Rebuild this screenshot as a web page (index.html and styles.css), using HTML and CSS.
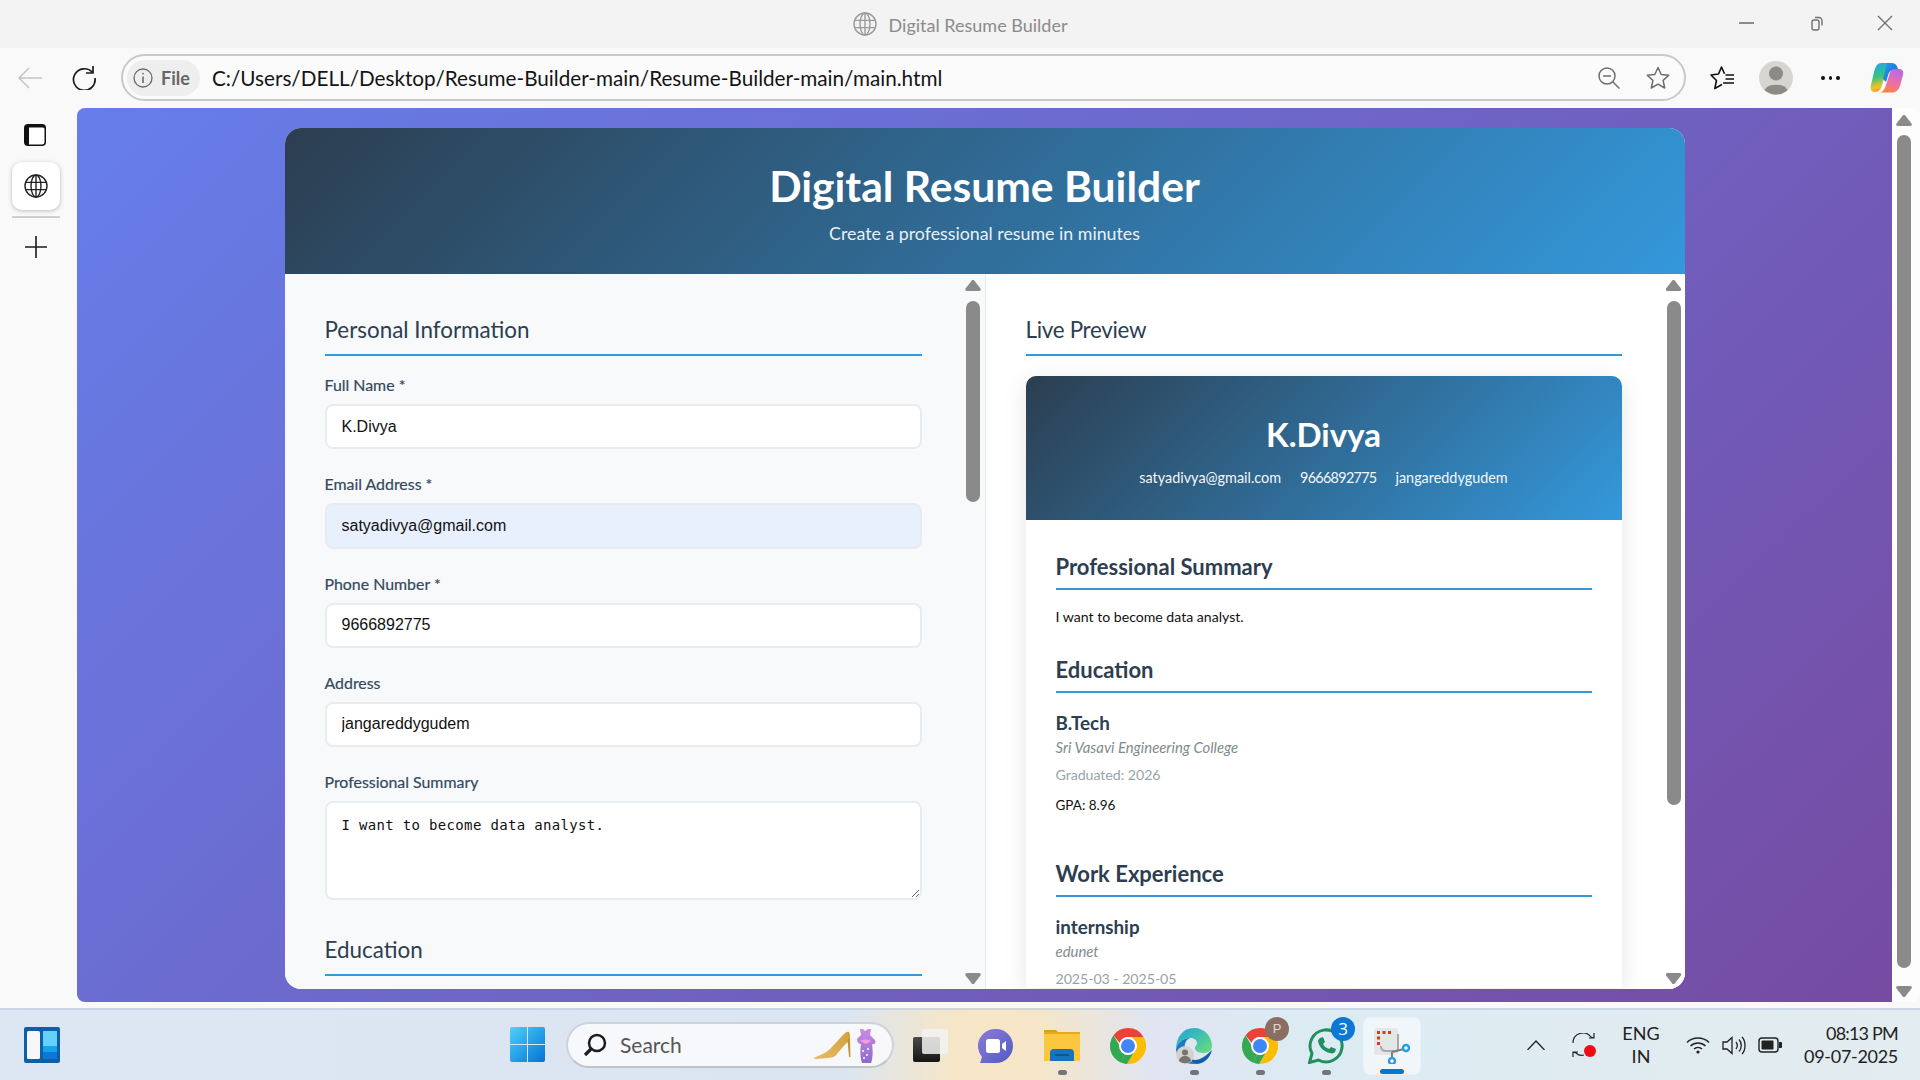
FILE: index.html
```html
<!DOCTYPE html>
<html lang="en">
<head>
<meta charset="utf-8">
<title>Digital Resume Builder</title>
<link rel="stylesheet" href="styles.css">
</head>
<body>
<svg class="defs" width="0" height="0" aria-hidden="true">
  <defs>
    <symbol id="globe" viewBox="0 0 24 24">
      <g fill="none" stroke="currentColor" stroke-width="1.4">
        <circle cx="12" cy="12" r="11"/>
        <ellipse cx="12" cy="12" rx="5" ry="11"/>
        <path d="M12 1v22M1.6 8.4h20.8M1.6 15.6h20.8"/>
      </g>
    </symbol>
    <symbol id="chrome" viewBox="0 0 36 36">
      <path d="M18 0a18 18 0 0 1 15.6 9H18a9 9 0 0 0-8.4 5.8L3.5 7.3A18 18 0 0 1 18 0z" fill="#ea4335"/>
      <path d="M3.5 7.3l7.8 13.3A9 9 0 0 0 15 26.5L11.2 34.7A18 18 0 0 1 3.5 7.3z" fill="#34a853"/>
      <path d="M33.6 9A18 18 0 0 1 18 36h-1l7.7-13a9 9 0 0 0-.2-10.6L22 9z" fill="#fbbc04"/>
      <path d="M11 34.6L15 26.4a9 9 0 0 0 9.7-3.4L17 36a18 18 0 0 1-6-1.4z" fill="#34a853"/>
      <circle cx="18" cy="18" r="9" fill="#fff"/>
      <circle cx="18" cy="18" r="7" fill="#4285f4"/>
    </symbol>
    <linearGradient id="copA" x1="0.3" y1="0" x2="0.5" y2="1"><stop offset="0" stop-color="#1fa8e8"/><stop offset=".45" stop-color="#35c47c"/><stop offset=".8" stop-color="#f6c324"/><stop offset="1" stop-color="#f58a2c"/></linearGradient>
    <linearGradient id="copB" x1="0.7" y1="0" x2="0.3" y2="1"><stop offset="0" stop-color="#b86ae6"/><stop offset=".55" stop-color="#ee6fa6"/><stop offset="1" stop-color="#f8843c"/></linearGradient>
    <linearGradient id="copC" x1="0" y1="0" x2="1" y2="1"><stop offset="0" stop-color="#1c9ceb"/><stop offset="1" stop-color="#2a62e0"/></linearGradient>
    <linearGradient id="winG" x1="0" y1="0" x2="1" y2="1"><stop offset="0" stop-color="#50d0fb"/><stop offset="1" stop-color="#0074d4"/></linearGradient>
    <linearGradient id="meetG" x1="0" y1="0" x2="1" y2="1"><stop offset="0" stop-color="#8f7bd8"/><stop offset="1" stop-color="#4e5bc4"/></linearGradient>
    <linearGradient id="edgeG" x1="0" y1="0" x2="1" y2="1"><stop offset="0" stop-color="#1ba3dd"/><stop offset="1" stop-color="#6be07a"/></linearGradient>
    <linearGradient id="dressG" x1="0" y1="0" x2="0" y2="1"><stop offset="0" stop-color="#c98be6"/><stop offset="1" stop-color="#8d6bc8"/></linearGradient>
    <linearGradient id="shoeG" x1="0" y1="1" x2="1" y2="0"><stop offset="0" stop-color="#e6bc62"/><stop offset="1" stop-color="#d3a03c"/></linearGradient>
    <linearGradient id="copyG" x1="0" y1="0" x2="0" y2="1"><stop offset="0" stop-color="#4a4a4a"/><stop offset="1" stop-color="#151515"/></linearGradient>
  </defs>
</svg>

<div class="screen">
  <div class="window">
    <header class="titlebar">
      <div></div>
      <div class="title">
        <svg class="title-globe"><use href="#globe"/></svg>
        <span>Digital Resume Builder</span>
      </div>
      <div class="win-controls">
        <svg class="ctl" viewBox="0 0 16 16"><path d="M0 8h15" stroke="#707070" stroke-width="1.6"/></svg>
        <svg class="ctl" viewBox="0 0 16 16" fill="none" stroke="#707070" stroke-width="1.4"><rect x="4" y="5" width="7" height="10" rx="2"/><path d="M7 2.5h4a3 3 0 0 1 3 3v5"/></svg>
        <svg class="ctl" viewBox="0 0 16 16"><path d="M1 1l14 14M15 1L1 15" stroke="#707070" stroke-width="1.4"/></svg>
      </div>
    </header>

    <nav class="toolbar">
      <svg class="tb-back" viewBox="0 0 24 24" fill="none" stroke="#c4c4c4" stroke-width="1.5"><path d="M24 12H1M11 2L1 12l10 10"/></svg>
      <svg class="tb-reload" viewBox="0 0 24 24" fill="none" stroke="#1a1a1a" stroke-width="1.7"><path d="M20.5 6.5A10.8 10.8 0 1 0 23 12"/><path d="M21 0v7h-7"/></svg>
      <div class="address">
        <div class="chip">
          <svg class="chip-i" viewBox="0 0 20 20" fill="none" stroke="#6a6a6a" stroke-width="1.3"><circle cx="10" cy="10" r="9"/><path d="M10 8.5V15" stroke-width="1.6"/><circle cx="10" cy="5.6" r=".9" fill="#6a6a6a" stroke="none"/></svg>
          <span>File</span>
        </div>
        <span class="url">C:/Users/DELL/Desktop/Resume-Builder-main/Resume-Builder-main/main.html</span>
        <svg class="addr-zoom" viewBox="0 0 22 22" fill="none" stroke="#6e6e6e" stroke-width="1.5"><circle cx="9" cy="9" r="8"/><path d="M5 9h8M14.7 14.7L21.5 21.5"/></svg>
        <svg class="addr-star" viewBox="0 0 24 24" fill="none" stroke="#6e6e6e" stroke-width="1.5" stroke-linejoin="round"><path d="M12 1.5l3.2 7 7.6.8-5.7 5.1 1.6 7.6-6.7-3.9-6.7 3.9 1.6-7.600L1.2 9.3l7.6-.8z"/></svg>
      </div>
      <svg class="tb-favs" viewBox="0 0 24 24" fill="none" stroke="#111" stroke-width="1.600" stroke-linejoin="round"><path d="M14.500 7.800L11.500 1 8.500 8 1 9l5.500 5.500-1.700 8 7.200-4"/><path d="M15.500 9h8.500M15.500 13H24M13 17h11"/></svg>
      <div class="avatar">
        <svg viewBox="0 0 34 34"><circle cx="17" cy="17" r="17" fill="#d6d5d1"/><circle cx="17" cy="12.500" r="7" fill="#8e8b87"/><path d="M5.500 29a12 7.500 0 0 1 23 0 17 17 0 0 1-23 0z" fill="#8e8b87"/></svg>
      </div>
      <div class="dots"><i></i><i></i><i></i></div>
      <svg class="copilot" viewBox="0 0 34 32">
        <path d="M11 1h12c-3 0-5 2-6 6l-5 16c-1 4-3 7-7 7s-5-3-4-7l3-13C5.500 4 8 1 11 1z" fill="url(#copA)"/>
        <path d="M23 7h6c3.500 0 5 2.500 4 6l-3 11c-1.500 4-4 6.500-8 6.500H9c3 0 5-2 6.500-6L20 10.500C21 8 22 7 23 7z" fill="url(#copB)"/>
        <path d="M17 1h5c3 0 5 2 6 6-5-.5-8 1-9.500 5l-2.500 8-3-3 2.500-9.500C16 4 17 1 17 1z" fill="url(#copC)"/>
      </svg>
    </nav>

    <div class="browser-body">
      <aside class="sidebar">
        <svg class="side-panel" viewBox="0 0 22 22"><path d="M4 0h14a4 4 0 0 1 4 4v14a4 4 0 0 1-4 4H4a4 4 0 0 1-4-4V4a4 4 0 0 1 4-4z" fill="#111"/><path d="M5 3.500h14a1.500 1.500 0 0 1 1.500 1.500v13a2.500 2.500 0 0 1-2.500 2.500H5z" fill="#fff"/></svg>
        <div class="side-tab"><svg class="side-globe"><use href="#globe"/></svg></div>
        <div class="side-rule"></div>
        <svg class="side-plus" viewBox="0 0 22 22"><path d="M11 0v22M0 11h22" stroke="#1a1a1a" stroke-width="1.600"/></svg>
      </aside>

      <main class="viewport">
        <div class="page">
          <section class="app">
            <header class="app-header">
              <h1>Digital Resume Builder</h1>
              <p>Create a professional resume in minutes</p>
            </header>
            <div class="panels">
              <div class="panel panel-form">
                <form class="panel-content">
                  <h2 class="section-title">Personal Information</h2>
                  <div class="field"><label>Full Name *</label><input type="text" value="K.Divya"></div>
                  <div class="field"><label>Email Address *</label><input class="autofilled" type="text" value="satyadivya@gmail.com"></div>
                  <div class="field"><label>Phone Number *</label><input type="text" value="9666892775"></div>
                  <div class="field"><label>Address</label><input type="text" value="jangareddygudem"></div>
                  <div class="field field-area"><label>Professional Summary</label><textarea>I want to become data analyst.</textarea></div>
                  <h2 class="section-title">Education</h2>
                </form>
                <div class="scroll scroll-panel"><i class="up"></i><b class="thumb thumb-form"></b><i class="down"></i></div>
              </div>
              <div class="panel panel-preview">
                <div class="panel-content">
                  <h2 class="section-title">Live Preview</h2>
                  <article class="resume">
                    <header class="resume-head">
                      <h3>K.Divya</h3>
                      <div class="contacts"><span>satyadivya@gmail.com</span><span class="c-phone">9666892775</span><span>jangareddygudem</span></div>
                    </header>
                    <div class="resume-body">
                      <section class="r-section">
                        <h4>Professional Summary</h4>
                        <p class="r-text">I want to become data analyst.</p>
                      </section>
                      <section class="r-section">
                        <h4>Education</h4>
                        <h5>B.Tech</h5>
                        <p class="r-org">Sri Vasavi Engineering College</p>
                        <p class="r-date">Graduated: 2026</p>
                        <p class="r-gpa">GPA: 8.96</p>
                      </section>
                      <section class="r-section r-work">
                        <h4>Work Experience</h4>
                        <h5>internship</h5>
                        <p class="r-org">edunet</p>
                        <p class="r-date">2025-03 - 2025-05</p>
                      </section>
                    </div>
                  </article>
                </div>
                <div class="scroll scroll-panel scroll-preview"><i class="up"></i><b class="thumb thumb-preview"></b><i class="down"></i></div>
              </div>
            </div>
          </section>
        </div>
        <div class="scroll scroll-page"><i class="up"></i><b class="thumb thumb-page"></b><i class="down"></i></div>
      </main>
    </div>
  </div>

  <footer class="taskbar">
    <svg class="widgets" viewBox="0 0 36 36"><rect width="36" height="36" rx="2" fill="#0f5ea8"/><rect x="3" y="4" width="13" height="28" rx="1.500" fill="#f5f7f9"/><rect x="19" y="4" width="14" height="15" fill="#63d2fb"/><rect x="19" y="19" width="14" height="6" fill="#1aa1ee"/><rect x="19" y="25" width="14" height="7" fill="#0a78d8"/></svg>
    <svg class="start" viewBox="0 0 35 35"><path d="M2 0h15v17H0V2a2 2 0 0 1 2-2zM18 0h15a2 2 0 0 1 2 2v15H18zM0 18h17v17H2a2 2 0 0 1-2-2zM18 18h17v15a2 2 0 0 1-2 2H18z" fill="url(#winG)"/></svg>
    <div class="search">
      <svg class="search-lens" viewBox="0 0 24 24" fill="none" stroke="#1c1c1c" stroke-width="2.500"><circle cx="14" cy="10" r="8"/><path d="M8 16l-6 6" stroke-width="3.200"/></svg>
      <span>Search</span>
      <svg class="search-art" viewBox="0 0 66 36">
        <path d="M1 31C6 28 12 27 17 22L30 8c2-2 4-4 6-3 1 1 1 3 1 5l-1 4c-3 2-8 8-12 13-2 3-6 4-10 4L3 32c-2 0-3-.5-2-1z" fill="url(#shoeG)"/>
        <path d="M34.500 13L37 10l.5 20H36z" fill="#c49238"/>
        <path d="M44 12l4-4-1-6h3l2 2 3-2 3 0-1 6 5 5c1 3 0 5-3 4 1 6 1 14-1 19-2 1-7 1-9 0-2-6-2-13-1-19-2 0-4-2-4-5z" fill="url(#dressG)"/>
        <path d="M47 14c3-2 8-2 11 0l-5 3z" fill="#ee9ddf"/>
        <circle cx="50" cy="24" r="1" fill="#fff"/><circle cx="54" cy="28" r="1" fill="#fff"/><circle cx="51" cy="31" r="1" fill="#fff"/><circle cx="55" cy="22" r="1" fill="#fff"/>
      </svg>
    </div>
    <div class="apps">
      <div class="app-slot">
        <svg class="tb-icon" viewBox="0 0 36 36"><rect x="1" y="9" width="27" height="25" rx="2" fill="url(#copyG)"/><rect x="10" y="1" width="26" height="25" rx="2" fill="#f2f2f2" fill-opacity=".85"/></svg>
      </div>
      <div class="app-slot">
        <svg class="tb-icon" viewBox="0 0 36 36"><path d="M18 1a17 17 0 0 1 0 34H2l2-6A17 17 0 0 1 18 1z" fill="url(#meetG)"/><rect x="8" y="11" width="14" height="14" rx="2.500" fill="#fff"/><path d="M24 16l4-3v10l-4-3z" fill="#fff"/></svg>
      </div>
      <div class="app-slot">
        <svg class="tb-icon" viewBox="0 0 36 36"><path d="M0 2h12l3 3H0z" fill="#d99e1c"/><path d="M0 4h36v29H0z" fill="#fcc63f"/><path d="M0 4h36v2H0z" fill="#e6a81f"/><path d="M6 33v-8a4 4 0 0 1 4-4h16a4 4 0 0 1 4 4v8z" fill="#1374c0"/><path d="M11 27h14" stroke="#0c4c86" stroke-width="1.500"/></svg>
        <i class="run"></i>
      </div>
      <div class="app-slot"><svg class="tb-icon"><use href="#chrome"/></svg></div>
      <div class="app-slot">
        <svg class="tb-icon" viewBox="0 0 36 36"><path d="M18 0c10 0 18 8 18 18 0 4-3 7-8 7-4 0-9-1-9-5 0-2 2-2 2-5 0-3-3-5-7-5C7 10 1 15 0 22 0 9 7 0 18 0z" fill="url(#edgeG)"/><path d="M0 22c1-7 7-12 14-12-5 2-6 7-5 13 1 5 5 11 11 13h-2C7 36 1 31 0 22z" fill="#1c78c4"/><path d="M20 36c-3-1-6-3-7-6 5 3 11 4 23-8-2 8-8 14-16 14z" fill="#135ea8"/><circle cx="9" cy="27" r="9" fill="#d4d2cf"/><circle cx="9" cy="24.500" r="3" fill="#77736f"/><path d="M3 33a6 5 0 0 1 12 0 9 9 0 0 1-12 0z" fill="#77736f"/></svg>
        <i class="run"></i>
      </div>
      <div class="app-slot">
        <svg class="tb-icon"><use href="#chrome"/></svg>
        <span class="badge badge-p">P</span>
        <i class="run"></i>
      </div>
      <div class="app-slot">
        <svg class="tb-icon" viewBox="0 0 36 36" fill="none"><path d="M1.500 34.500l2.500-9A16 16 0 1 1 10.500 32z" stroke="#1f8f5f" stroke-width="3"/><path d="M12 10l3-1 2 5-2 2c1 2 3 4 6 5l2-2 5 2-1 3c-1 1-3 2-5 1-6-1-11-6-12-12 0-1 1-2 2-3z" fill="#1f8f5f"/></svg>
        <span class="badge badge-3">3</span>
        <i class="run"></i>
      </div>
      <div class="app-slot app-active">
        <svg class="tb-icon" viewBox="0 0 36 36"><rect x="0" y="0" width="24" height="27" rx="3" fill="#e4e6e8"/><path d="M3 3h3v3H3zM8.500 3h3v3h-3zM14 3h3v3h-3zM3 8.500h3v3H3zM3 14h3v3H3z" fill="#d83b0f"/><path d="M7 18c0 3 2 5 5 5h10c1 0 2-1 2-2V6" fill="none" stroke="#a9aaac" stroke-width="2"/><path d="M18 24l12-3M18 24v7" stroke="#7a7c80" stroke-width="2"/><circle cx="32" cy="20" r="3" fill="#fff" stroke="#2a9be8" stroke-width="2.500"/><circle cx="18" cy="33" r="3" fill="#fff" stroke="#2a9be8" stroke-width="2.500"/></svg>
        <i class="active-bar"></i>
      </div>
    </div>
    <div class="tray">
      <svg class="t-chev" viewBox="0 0 18 10" fill="none" stroke="#222" stroke-width="1.300"><path d="M0.500 10L9 1l8.500 9"/></svg>
      <svg class="t-sync" viewBox="0 0 24 24" fill="none" stroke="#222" stroke-width="1.200"><path d="M1 10a10 10 0 0 1 18-6l3 1M22 0v5h-5M1 24v-5h5M1 19l3 1c2 2 5 3 8 2"/><circle cx="18" cy="18" r="6" fill="#f00d12" stroke="none"/></svg>
      <div class="t-lang"><span>ENG</span><span>IN</span></div>
      <svg class="t-wifi" viewBox="0 0 24 18" fill="none" stroke="#222" stroke-width="1.500"><path d="M1 6.500a16 16 0 0 1 22 0M4.500 10a11 11 0 0 1 15 0M8 13a6 6 0 0 1 8 0"/><circle cx="12" cy="16" r="1.600" fill="#222" stroke="none"/></svg>
      <svg class="t-sound" viewBox="0 0 24 19" fill="none" stroke="#222" stroke-width="1.300"><path d="M1 6h4l5-4.500v16L5 13H1zM14 6c1.500 2 1.500 5 0 7M17 3.500c3 3 3 9 0 12M20 1c4 4 4 13 0 17"/></svg>
      <svg class="t-batt" viewBox="0 0 24 16"><rect x="1" y="1" width="19" height="14" rx="3" fill="none" stroke="#222" stroke-width="1.400"/><rect x="3.500" y="3.500" width="12" height="9" rx="1" fill="#222"/><path d="M21 5h2a1 1 0 0 1 1 1v4a1 1 0 0 1-1 1h-2z" fill="#222"/></svg>
      <div class="t-clock"><span class="t-time">08:13 PM</span><span class="t-date">09-07-2025</span></div>
    </div>
  </footer>
</div>
</body>
</html>
```
FILE: styles.css
```css
* { box-sizing: border-box; }
html, body { margin: 0; padding: 0; overflow: hidden; }
body { font-family: "Lato", "Open Sans", sans-serif; color: #111; }
.defs { position: absolute; }
svg { display: block; flex: none; }

.screen { width: 1920px; height: 1080px; display: flex; flex-direction: column; background: #f9f9f9; overflow: hidden; }
.window { height: 1008px; display: flex; flex-direction: column; flex: none; }

/* Title bar */
.titlebar { height: 48px; flex: none; background: #f3f3f3; display: grid; grid-template-columns: 1fr auto 1fr; align-items: center; }
.title { display: flex; align-items: center; gap: 12px; color: #8b8b8b; font-size: 18px; line-height: 26px; }
.title span { padding-top: 1px; }
.title-globe { width: 24px; height: 24px; color: #9a9a9a; }
.win-controls { display: flex; justify-content: flex-end; align-items: center; gap: 53px; padding-right: 27px; margin-top: -2px; }
.ctl { width: 16px; height: 16px; }

/* Tool bar */
.toolbar { height: 60px; flex: none; background: #f9f9f9; display: flex; align-items: center; position: relative; padding-left: 18px; }
.tb-back { width: 24px; height: 24px; }
.tb-reload { width: 24px; height: 24px; margin-left: 30px; }
.address { width: 1565px; height: 47px; margin-left: 25px; margin-top: -1px; border: 2px solid #c9c9c9; border-radius: 24px; background: #fbfbfb; display: flex; align-items: center; padding-left: 4px; }
.chip { width: 73px; height: 36px; border-radius: 18px; background: #eeeeee; display: flex; align-items: center; padding-left: 6px; gap: 8px; color: #666; font-size: 18px; font-weight: 700; }
.chip-i { width: 20px; height: 20px; }
.url { margin-left: 12px; font-size: 20.7px; color: #141414; white-space: nowrap; }
.addr-zoom { width: 22px; height: 22px; margin-left: auto; }
.addr-star { width: 24px; height: 24px; margin-left: 26px; margin-right: 14px; }
.tb-favs { width: 24px; height: 24px; margin-left: 24px; }
.avatar { width: 34px; height: 34px; margin-left: 25px; }
.dots { display: flex; gap: 4px; margin-left: 28px; width: 19px; }
.dots i { width: 4px; height: 4px; border-radius: 50%; background: #111; }
.copilot { width: 34px; height: 32px; margin-left: 30px; }

/* Sidebar */
.browser-body { flex: 1; display: flex; min-height: 0; padding-bottom: 6px; }
.sidebar { width: 77px; flex: none; display: flex; flex-direction: column; align-items: flex-start; padding: 16px 0 0 12px; }
.side-panel { width: 22px; height: 22px; margin-left: 12px; }
.side-tab { width: 48px; height: 48px; margin-top: 16px; background: #fff; border-radius: 10px; box-shadow: 0 1px 4px rgba(0,0,0,.25); display: flex; align-items: center; justify-content: center; }
.side-globe { width: 24px; height: 24px; color: #222; }
.side-rule { width: 48px; height: 2px; margin-top: 6px; background: #cfcfcf; }
.side-plus { width: 22px; height: 22px; margin: 18px 0 0 13px; }

/* Viewport */
.viewport { flex: 1; min-width: 0; display: flex; border-radius: 8px 0 0 8px; overflow: hidden; }
.page { flex: 1; min-width: 0; background: linear-gradient(135deg, #667eea 0%, #764ba2 100%); padding-top: 20px; display: flex; justify-content: center; align-items: flex-start; }

/* Scrollbars */
.scroll { flex: none; display: flex; flex-direction: column; align-items: center; background: #fff; }
.scroll .up, .scroll .down { width: 16px; height: 11px; display: block; background: #8a8a8a; flex: none; }
.scroll .up { clip-path: path("M8 0C9 0 9.500 .5 10 1.500L15.500 8.500C16.300 10 15.500 11 14 11H2C.5 11-.3 10 .5 8.500L6 1.500C6.500 .5 7 0 8 0Z"); }
.scroll .down { margin-top: auto; clip-path: path("M8 11C9 11 9.500 10.500 10 9.500L15.500 2.500C16.300 1 15.500 0 14 0H2C.5 0-.3 1 .5 2.500L6 9.500C6.500 10.500 7 11 8 11Z"); }
.thumb { display: block; background: #8a8a8a; border-radius: 7px; width: 14px; }
.scroll-page { width: 28px; padding: 7px 4px 5px 0; border-radius: 0 8px 8px 0; background: #fdfdfd; }
.thumb-page { height: 833px; margin-top: 9px; }
.scroll-panel { width: 23px; padding: 6px 0 5px; background: transparent; height: 100%; }
.scroll-preview { padding-left: 1px; }
.thumb-form { height: 201px; margin-top: 10px; }
.thumb-preview { height: 504px; margin-top: 10px; }

/* App card */
.app { width: 1400px; height: 861px; border-radius: 16px; overflow: hidden; background: #fff; display: flex; flex-direction: column; }
.app-header { height: 146px; flex: none; background: linear-gradient(135deg, #2c3e50, #3498db); color: #fff; text-align: center; padding-top: 33px; }
.app-header h1 { margin: 0; font-size: 42.6px; line-height: 50px; font-weight: 700; }
.app-header p { margin: 10px 0 0; font-size: 17.8px; line-height: 24px; opacity: .9; }

.panels { flex: 1; min-height: 0; display: grid; grid-template-columns: 701px 699px; }
.panel { display: flex; min-width: 0; overflow: hidden; height: 715px; }
.panel-form { background: #f8f9fa; border-right: 1px solid #e9ecef; }
.panel-preview { background: #fff; }
.panel-content { flex: 1; min-width: 0; padding: 40px 40px 0; overflow: hidden; }
.panel-preview .panel-content { padding-right: 40px; }
.section-title { margin: 0 0 21px; height: 42px; padding-bottom: 8px; border-bottom: 2px solid #3498db; font-size: 22.4px; line-height: 32px; font-weight: 400; color: #2c3e50; }
.panel-preview .section-title { margin-bottom: 20px; letter-spacing: -.3px; }

.field { margin-bottom: 27px; }
.field label { display: block; height: 20px; margin-bottom: 7px; font-size: 15.9px; line-height: 16px; font-weight: 400; color: #34495e; -webkit-text-stroke: .2px #34495e; }
.field input, .field textarea { display: block; width: 100%; border: 2px solid #e9ecef; border-radius: 8px; background: #fff; color: #111; padding: 0 15px; outline: none; }
.field input { height: 45.25px; font: 16px "Liberation Sans", sans-serif; }
.field input.autofilled { background: #e8f0fe; }
.field textarea { height: 99px; padding: 13px 15px; font: 14px/18px "DejaVu Sans Mono", monospace; letter-spacing: .33px; }
.field-area { margin-bottom: 34px; }

/* Resume preview */
.resume { border-radius: 10px 10px 0 0; box-shadow: 0 5px 24px rgba(0,0,0,.1); background: #fff; }
.resume-head { height: 144px; border-radius: 10px 10px 0 0; background: linear-gradient(135deg, #2c3e50, #3498db); color: #fff; text-align: center; padding-top: 38px; }
.resume-head h3 { margin: 0; font-size: 33px; line-height: 40px; font-weight: 700; }
.contacts { margin-top: 14px; display: flex; justify-content: center; gap: 19px; font-size: 14.4px; line-height: 20px; opacity: .95; }
.c-phone { letter-spacing: -.7px; }
.resume-body { padding: 34px 30px 0; }
.r-section { margin-bottom: 31px; }
.r-section h4 { margin: 0; height: 36px; padding-bottom: 6px; border-bottom: 2px solid #3498db; font-size: 22px; line-height: 26px; font-weight: 700; color: #2c3e50; }
.r-text { margin: 18px 0 0; font-size: 14.1px; line-height: 18px; color: #111; }
.r-section h5 { margin: 19px 0 0; font-size: 18.8px; line-height: 22px; font-weight: 700; color: #2c3e50; }
.r-org { margin: 4px 0 0; font-size: 14.9px; line-height: 18px; font-style: italic; color: #7f8c8d; }
.r-date { margin: 10px 0 0; font-size: 14.2px; line-height: 18px; color: #95a5a6; letter-spacing: -.05px; }
.r-gpa { margin: 12px 0 0; font-size: 13.5px; line-height: 18px; color: #111; }
.r-work { margin-top: 47px; }

/* Taskbar */
.taskbar { height: 72px; flex: none; display: flex; align-items: center; padding-left: 24px; position: relative; border-top: 2px solid rgba(190,205,222,.65);
  background: linear-gradient(90deg, #dde7f3 0%, #dbe5f1 44%, #f7e6c6 50%, #f6e6c8 54%, #e0e5f1 60%, #dcebf3 68%, #e3ecef 100%); }
.widgets { width: 36px; height: 36px; }
.start { width: 35px; height: 35px; margin-left: 450px; margin-top: -2px; }
.search { width: 328px; height: 46px; margin-left: 21px; margin-top: -1px; border-radius: 23px; background: rgba(250,250,252,.9); border: 2px solid #cdd3dc; border-bottom-color: #bfc3c9; display: flex; align-items: center; padding-left: 15px; color: #555; font-size: 21px; }
.search-lens { width: 24px; height: 24px; }
.search span { margin-left: 13px; }
.search-art { width: 66px; height: 36px; margin-left: auto; margin-right: 13px; }
.apps { display: flex; margin-left: 3px; align-items: center; }
.app-slot { width: 66px; height: 56px; position: relative; display: flex; align-items: center; justify-content: center; border-radius: 6px; margin-top: 1px; }
.tb-icon { width: 36px; height: 36px; }
.run { position: absolute; left: 29px; bottom: -1px; width: 9px; height: 5px; border-radius: 3px; background: #71757b; }
.app-active { width: 56px; margin-left: 5px; background: rgba(255,255,255,.55); box-shadow: 0 0 0 1px rgba(255,255,255,.35); }
.active-bar { position: absolute; left: 16px; bottom: 0; width: 24px; height: 5px; border-radius: 3px; background: #0078d4; }
.badge { position: absolute; width: 24px; height: 24px; border-radius: 50%; top: -1px; left: 38px; display: flex; align-items: center; justify-content: center; color: #fff; font-size: 14px; }
.badge-p { background: #8a6e64; color: #e3d6d0; font-family: "Liberation Sans", sans-serif; font-size: 13px; }
.badge-3 { background: #0a78d4; font-size: 17px; font-family: "Open Sans", sans-serif; }

.tray { margin-left: auto; display: flex; align-items: center; color: #222; position: relative; padding-right: 22px; }
.t-chev { width: 18px; height: 10px; }
.t-sync { width: 24px; height: 24px; margin-left: 27px; }
.t-lang { display: flex; flex-direction: column; align-items: center; width: 50px; margin-left: 20px; font-size: 18px; line-height: 23px; }
.t-wifi { width: 24px; height: 18px; margin-left: 20px; }
.t-sound { width: 24px; height: 19px; margin-left: 12px; }
.t-batt { width: 24px; height: 16px; margin-left: 12px; }
.t-clock { display: flex; flex-direction: column; align-items: flex-end; width: 100px; margin-left: 16px; font-size: 18px; line-height: 23px; }
.t-time { letter-spacing: -.8px; }
.t-date { letter-spacing: -.3px; }
```
